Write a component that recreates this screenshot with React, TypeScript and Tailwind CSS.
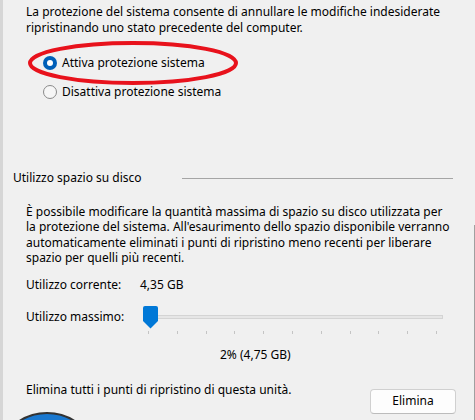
export default function App() {
  const ticks = Array.from({ length: 11 }, (_, i) => i);
  return (
    <div className="relative h-[420px] w-[475px] overflow-hidden border-l-[3px] border-[#d6d6d6] bg-[#f0f0f0] font-['Noto_Sans',sans-serif] text-[12px] text-black">
      <p className="pl-[23px] pt-[4px] leading-[15.5px]">
        La protezione del sistema consente di annullare le modifiche indesiderate
        <br />
        ripristinando uno stato precedente del computer.
      </p>

      <div className="mt-[18px] flex flex-col gap-[9px] pl-[40px]">
        <label className="flex h-[20px] items-center gap-[5px]">
          <span className="flex h-[14px] w-[14px] items-center justify-center rounded-full bg-[#005fb8]">
            <span className="h-[6px] w-[6px] rounded-full bg-white" />
          </span>
          <span>Attiva protezione sistema</span>
        </label>
        <label className="flex h-[20px] items-center gap-[5px]">
          <span className="h-[14px] w-[14px] rounded-full border border-[#8a8a8a] bg-[#f6f6f6]" />
          <span>Disattiva protezione sistema</span>
        </label>
      </div>

      <div className="mt-[68px] flex h-[16px] items-center justify-between pl-[10px] pr-[22px]">
        <span>Utilizzo spazio su disco</span>
        <span className="h-px w-[271px] bg-[#a5a5a5]" />
      </div>

      <p className="mt-[18px] pl-[23px] leading-[15.4px]">
        È possibile modificare la quantità massima di spazio su disco utilizzata per
        <br />
        la protezione del sistema. All'esaurimento dello spazio disponibile verranno
        <br />
        automaticamente eliminati i punti di ripristino meno recenti per liberare
        <br />
        spazio per quelli più recenti.
      </p>

      <div className="mt-[11px] flex h-[16px] items-center pl-[23px]">
        <span className="w-[114px]">Utilizzo corrente:</span>
        <span>4,35 GB</span>
      </div>

      <div className="mt-[12px] flex h-[30px] items-start pl-[23px]">
        <span className="w-[116px] pt-[4px] leading-[16px]">Utilizzo massimo:</span>
        <div className="relative h-[30px] w-[302px]">
          <div className="absolute left-[3px] top-[10px] h-[4px] w-[298px] border border-[#d4d4d4] bg-[#e6e6e6]" />
          <svg className="absolute left-[1px] top-[1px]" width="15" height="23" viewBox="0 0 15 23">
            <path d="M2 0H13a2 2 0 0 1 2 2V15L7.5 22.5L0 15V2a2 2 0 0 1 2-2Z" fill="#0078d7" />
          </svg>
          <div className="absolute left-[6px] top-[26px] flex w-[289px] justify-between">
            {ticks.map((i) => (
              <span key={i} className="h-[3px] w-px bg-[#c4c4c4]" />
            ))}
          </div>
        </div>
      </div>

      <div className="mt-[12px] h-[16px] pl-[217px] leading-[16px]">2% (4,75 GB)</div>

      <div className="mt-[19px] flex items-start justify-between pl-[23px] pr-[19px]">
        <span className="leading-[16px]">Elimina tutti i punti di ripristino di questa unità.</span>
        <button className="mt-[7px] flex h-[25px] w-[86px] items-center justify-center rounded-[4px] border border-[#d0d0d0] border-b-[#bcbcbc] bg-[#fdfdfd]">
          Elimina
        </button>
      </div>

      <div className="absolute left-[-8px] top-[412px] h-[104px] w-[104px] rounded-full border-2 border-[#333] bg-[#1a78cf]" />
      <div className="absolute right-0 top-[225px] h-[195px] w-px bg-[#a0a0a0]" />

      <svg className="absolute left-[23px] top-[39px]" width="214" height="48" viewBox="0 0 214 48">
        <ellipse cx="107" cy="24" rx="103" ry="20" fill="none" stroke="#e8121c" strokeWidth="4" />
      </svg>
    </div>
  );
}
